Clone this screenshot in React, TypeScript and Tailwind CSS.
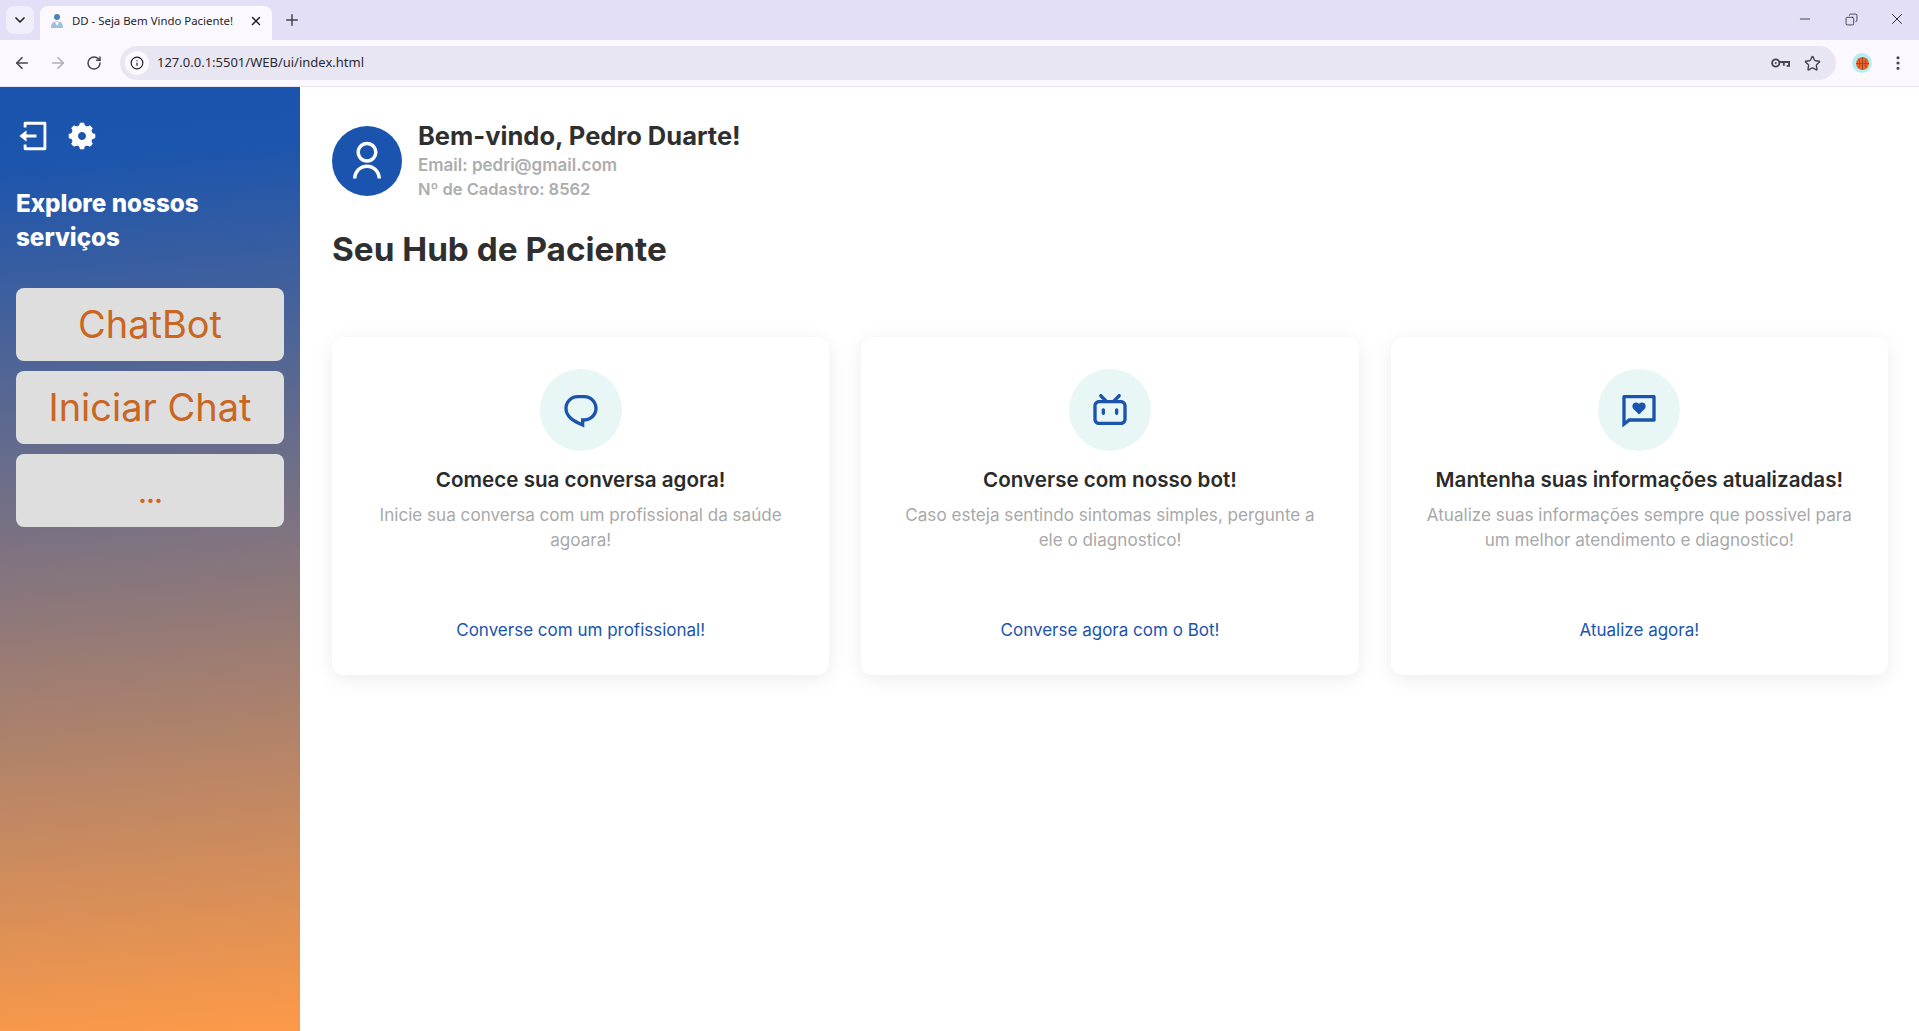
import React from "react";
import { ArrowLeft, ArrowRight, ChevronDown, Copy, Info, Minus, MoreVertical, Plus, RotateCw, Star, X } from "lucide-react";
import { RiBilibiliLine, RiChat1Line, RiChatHeartLine, RiLogoutBoxLine, RiSettings5Fill, RiUserLine } from "react-icons/ri";

const BrowserChrome = () => (
  <div className="font-['Noto_Sans',sans-serif] text-[12px] text-[#1f1f1f]">
    <div className="h-[40px] bg-[#e3dff6] flex items-end pl-[6px]">
      <div className="w-[28px] h-[28px] mb-[6px] rounded-lg bg-[#f1eefb] flex items-center justify-center">
        <ChevronDown className="w-4 h-4" strokeWidth={2.5} />
      </div>
      <div className="ml-[6px] w-[232px] h-[34px] bg-[#fbf9ff] rounded-t-lg flex items-center pl-[9px] pr-[9px] pb-[4px]">
        <svg viewBox="0 0 16 16" className="w-[16px] h-[16px] shrink-0">
          <circle cx="8" cy="4" r="3" fill="#4a83b8" />
          <path d="M2 15c0-5 2-6.500 6-6.500s6 1.500 6 6.500z" fill="#9cc0de" />
          <path d="M6 9l2 4 2-4z" fill="#fff" />
        </svg>
        <span className="ml-[7px] flex-1 whitespace-nowrap text-[11.400px]">DD - Seja Bem Vindo Paciente!</span>
        <X className="w-[14px] h-[14px]" strokeWidth={2.5} />
      </div>
      <Plus className="ml-[11px] mb-[11px] w-[18px] h-[18px] text-[#444]" />
      <div className="flex-1" />
      <div className="flex items-center mb-[12px] pr-[13px]">
        <Minus className="w-[16px] h-[16px]" strokeWidth={1.2} />
        <Copy className="ml-[32px] w-[13px] h-[13px] -scale-x-100" strokeWidth={1.4} />
        <X className="ml-[30px] w-[18px] h-[18px]" strokeWidth={1.2} />
      </div>
    </div>
    <div className="h-[47px] bg-[#fbf9ff] border-b border-[#e8e4f0] flex items-center pl-[13px] pr-[12px]">
      <ArrowLeft className="w-[18px] h-[18px] text-[#45454f]" strokeWidth={2.2} />
      <ArrowRight className="ml-[18px] w-[18px] h-[18px] text-[#b0afb6]" strokeWidth={2.2} />
      <RotateCw className="ml-[19px] w-[16px] h-[16px] text-[#45454f]" strokeWidth={2.2} />
      <div className="ml-[18px] flex-1 h-[34px] rounded-full bg-[#e9e6f3] flex items-center pl-[5px] pr-[15px]">
        <div className="w-[24px] h-[24px] rounded-full bg-[#fbf9ff] flex items-center justify-center">
          <Info className="w-[14px] h-[14px]" strokeWidth={2} />
        </div>
        <span className="ml-[8px] text-[13px] text-[#2a2a33]">127.0.0.1:5501/WEB/ui/index.html</span>
        <div className="flex-1" />
        <svg viewBox="0 0 20 12" className="w-[19px] h-[12px] mr-[14px] text-[#45454f]" fill="none" stroke="currentColor" strokeWidth="2">
          <circle cx="5" cy="6" r="3.800" />
          <circle cx="5" cy="6" r="1" fill="currentColor" stroke="none" />
          <path d="M9 5h10v4h-2.500M13.500 5v4" />
        </svg>
        <Star className="w-[17px] h-[17px] text-[#45454f]" strokeWidth={2} />
      </div>
      <div className="ml-[16px] w-[20px] h-[20px] rounded-full bg-[#b7ecf2] flex items-center justify-center">
        <svg viewBox="0 0 12 12" className="w-[13px] h-[13px]">
          <circle cx="6" cy="6" r="6" fill="#e8622a" />
          <path d="M6 0v12M0 6h12M2 1.500c2 2 2 7 0 9M10 1.500c-2 2-2 7 0 9" fill="none" stroke="#8a3a18" strokeWidth="0.600" />
        </svg>
      </div>
      <MoreVertical className="ml-[17px] w-[18px] h-[18px] text-[#45454f]" strokeWidth={2.2} />
    </div>
  </div>
);

const Sidebar = () => (
  <aside className="w-[300px] shrink-0 px-[16px] pt-[32px] bg-[linear-gradient(175deg,#1a54ae_0%,#1c55ad_8%,#fd9a48_100%)]">
    <div className="flex items-center gap-[14px] pl-[2px] text-white">
      <RiLogoutBoxLine className="w-[34px] h-[34px]" />
      <RiSettings5Fill className="w-[32px] h-[32px]" />
    </div>
    <h2 className="mt-[34px] text-[24.200px] leading-[34px] font-extrabold text-white">Explore nossos serviços</h2>
    <div className="mt-[33px] flex flex-col gap-[10px]">
      <button className="h-[73px] pb-[2px] rounded-lg bg-[#dedede] text-[#c9661f] text-[38px] leading-none">ChatBot</button>
      <button className="h-[73px] pb-[2px] rounded-lg bg-[#dedede] text-[#c9661f] text-[38px] leading-none">Iniciar Chat</button>
      <button className="h-[73px] pt-[4px] rounded-lg bg-[#dedede] text-[#c9661f] text-[28px] font-semibold tracking-[-1px] leading-none">...</button>
    </div>
  </aside>
);

const Card = ({ icon: Icon, title, text, link }: any) => (
  <div className="h-[338px] rounded-xl bg-white shadow-[0_4px_20px_rgba(0,0,0,0.08)] flex flex-col items-center px-[32px] pt-[32px] text-center">
    <div className="w-[82px] h-[82px] rounded-full bg-[#e8f6f6] flex items-center justify-center">
      <Icon className="w-[40px] h-[40px] text-[#1a54ae]" />
    </div>
    <h3 className="mt-[14px] text-[20.600px] leading-[30px] font-semibold text-[#2b2b2b]">{title}</h3>
    <p className="mt-[7px] text-[17.100px] leading-[25px] text-[#a8a8a8]">{text}</p>
    <a className="mt-auto mb-[32px] text-[17px] leading-[25px] text-[#1a54ae]">{link}</a>
  </div>
);

export default function App() {
  return (
    <div className="h-screen flex flex-col bg-white overflow-hidden font-['Inter',sans-serif]">
      <BrowserChrome />
      <div className="flex-1 flex">
        <Sidebar />
        <main className="flex-1 pl-[32px] pr-[31px] pt-[34px]">
          <div className="flex items-center gap-[16px]">
            <div className="w-[70px] h-[70px] rounded-full bg-[#1a54ae] flex items-center justify-center">
              <RiUserLine className="w-[42px] h-[42px] text-white" />
            </div>
            <div>
              <h1 className="text-[25.500px] leading-[30px] font-bold text-[#2f2f2f]">Bem-vindo, Pedro Duarte!</h1>
              <p className="mt-[2px] text-[17px] leading-[24px] font-semibold text-[#adadad]">Email: pedri@gmail.com</p>
              <p className="text-[16.500px] leading-[24px] font-semibold text-[#adadad]">Nº de Cadastro: 8562</p>
            </div>
          </div>
          <h1 className="mt-[23px] text-[33.300px] leading-[50px] font-bold text-[#2f2f2f]">Seu Hub de Paciente</h1>
          <div className="mt-[63px] grid grid-cols-3 gap-[32px]">
            <Card
              icon={RiChat1Line}
              title="Comece sua conversa agora!"
              text="Inicie sua conversa com um profissional da saúde agoara!"
              link="Converse com um profissional!"
            />
            <Card
              icon={RiBilibiliLine}
              title="Converse com nosso bot!"
              text="Caso esteja sentindo sintomas simples, pergunte a ele o diagnostico!"
              link="Converse agora com o Bot!"
            />
            <Card
              icon={RiChatHeartLine}
              title="Mantenha suas informações atualizadas!"
              text="Atualize suas informações sempre que possivel para um melhor atendimento e diagnostico!"
              link="Atualize agora!"
            />
          </div>
        </main>
      </div>
    </div>
  );
}
